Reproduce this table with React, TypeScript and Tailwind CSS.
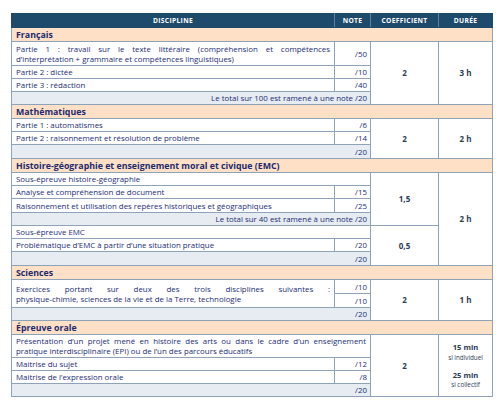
import React from "react";

const bd = "border border-[#8ea3b8]";
const td = `${bd} px-[4px] py-0 align-middle`;
const note = `${bd} pr-[3px] text-right align-middle`;
const big = `${bd} text-center align-middle font-bold text-[#2b3a55] text-[8px]`;

const Section = ({ title }: { title: string }) => (
	<tr className="h-[14px]">
		<td colSpan={4} className={`${bd} bg-[#fde0c5] px-[4px] text-[8.8px] font-bold text-[#1e2a6e]`}>
			{title}
		</td>
	</tr>
);

const Total = ({ children }: { children: React.ReactNode }) => (
	<td colSpan={2} className={`${bd} bg-[#e6ecf1] pr-[3px] text-right`}>
		{children}
	</td>
);

// two lines, first one stretched to the full width like the source
const TwoLines = ({ first, second }: { first: string; second: string }) => (
	<>
		<span className="block text-justify [text-align-last:justify]">{first}</span>
		<span className="block">{second}</span>
	</>
);

export default function App() {
	return (
		<div className="w-[500px] h-[406px] bg-white pt-[13px] pl-[11px]">
			<table
				className="table-fixed border-collapse w-[481px] text-[7.9px] leading-[10px] text-[#232d74]"
				style={{ fontFamily: "'Open Sans', Lato, sans-serif" }}
			>
				<colgroup>
					<col className="w-[323px]" />
					<col className="w-[36px]" />
					<col className="w-[68px]" />
					<col className="w-[54px]" />
				</colgroup>
				<thead>
					<tr className="h-[14px] bg-[#1e4a6b] text-white text-[6.7px] font-bold tracking-[0.05em]">
						<th className="border border-[#1e4a6b] border-r-[#5f7f9a] font-bold">DISCIPLINE</th>
						<th className="border border-[#1e4a6b] border-r-[#5f7f9a] font-bold">NOTE</th>
						<th className="border border-[#1e4a6b] border-r-[#5f7f9a] font-bold">COEFFICIENT</th>
						<th className="border border-[#1e4a6b] font-bold">DURÉE</th>
					</tr>
				</thead>
				<tbody>
					<Section title="Français" />
					<tr className="h-[24px]">
						<td className={td}>
							<TwoLines
								first="Partie 1 : travail sur le texte littéraire (compréhension et compétences"
								second="d’interprétation + grammaire et compétences linguistiques)"
							/>
						</td>
						<td className={note}>/50</td>
						<td rowSpan={4} className={big}>2</td>
						<td rowSpan={4} className={big}>3 h</td>
					</tr>
					<tr className="h-[13px]">
						<td className={td}>Partie 2 : dictée</td>
						<td className={note}>/10</td>
					</tr>
					<tr className="h-[13px]">
						<td className={td}>Partie 3 : rédaction</td>
						<td className={note}>/40</td>
					</tr>
					<tr className="h-[13px]">
						<Total>Le total sur 100 est ramené à une note /20</Total>
					</tr>

					<Section title="Mathématiques" />
					<tr className="h-[13px]">
						<td className={td}>Partie 1 : automatismes</td>
						<td className={note}>/6</td>
						<td rowSpan={3} className={big}>2</td>
						<td rowSpan={3} className={big}>2 h</td>
					</tr>
					<tr className="h-[13px]">
						<td className={td}>Partie 2 : raisonnement et résolution de problème</td>
						<td className={note}>/14</td>
					</tr>
					<tr className="h-[14px]">
						<Total>/20</Total>
					</tr>

					<Section title="Histoire-géographie et enseignement moral et civique (EMC)" />
					<tr className="h-[13px]">
						<td colSpan={2} className={td}>Sous-épreuve histoire-géographie</td>
						<td rowSpan={4} className={big}>1,5</td>
						<td rowSpan={7} className={big}>2 h</td>
					</tr>
					<tr className="h-[13px]">
						<td className={td}>Analyse et compréhension de document</td>
						<td className={note}>/15</td>
					</tr>
					<tr className="h-[14px]">
						<td className={td}>Raisonnement et utilisation des repères historiques et géographiques</td>
						<td className={note}>/25</td>
					</tr>
					<tr className="h-[13px]">
						<Total>Le total sur 40 est ramené à une note /20</Total>
					</tr>
					<tr className="h-[13px]">
						<td colSpan={2} className={td}>Sous-épreuve EMC</td>
						<td rowSpan={3} className={big}>0,5</td>
					</tr>
					<tr className="h-[13px]">
						<td className={td}>Problématique d’EMC à partir d’une situation pratique</td>
						<td className={note}>/20</td>
					</tr>
					<tr className="h-[14px]">
						<Total>/20</Total>
					</tr>

					<Section title="Sciences" />
					<tr className="h-[14px]">
						<td rowSpan={2} className={td}>
							<TwoLines
								first="Exercices portant sur deux des trois disciplines suivantes :"
								second="physique-chimie, sciences de la vie et de la Terre, technologie"
							/>
						</td>
						<td className={note}>/10</td>
						<td rowSpan={3} className={big}>2</td>
						<td rowSpan={3} className={big}>1 h</td>
					</tr>
					<tr className="h-[14px]">
						<td className={note}>/10</td>
					</tr>
					<tr className="h-[13px]">
						<Total>/20</Total>
					</tr>

					<Section title="Épreuve orale" />
					<tr className="h-[23px]">
						<td colSpan={2} className={td}>
							<TwoLines
								first="Présentation d’un projet mené en histoire des arts ou dans le cadre d’un enseignement"
								second="pratique interdisciplinaire (EPI) ou de l’un des parcours éducatifs"
							/>
						</td>
						<td rowSpan={4} className={big}>2</td>
						<td rowSpan={4} className={`${bd} text-center align-middle text-[#2b3a55]`}>
							<div className="font-bold text-[7.6px] leading-[10px]">15 min</div>
							<div className="text-[6.3px] leading-[10px] mt-[1px]">si individuel</div>
							<div className="font-bold text-[7.6px] leading-[10px] mt-[7px]">25 min</div>
							<div className="text-[6.3px] leading-[10px]">si collectif</div>
						</td>
					</tr>
					<tr className="h-[13px]">
						<td className={td}>Maitrise du sujet</td>
						<td className={note}>/12</td>
					</tr>
					<tr className="h-[13px]">
						<td className={td}>Maitrise de l’expression orale</td>
						<td className={note}>/8</td>
					</tr>
					<tr className="h-[13px]">
						<Total>/20</Total>
					</tr>
				</tbody>
			</table>
		</div>
	);
}
